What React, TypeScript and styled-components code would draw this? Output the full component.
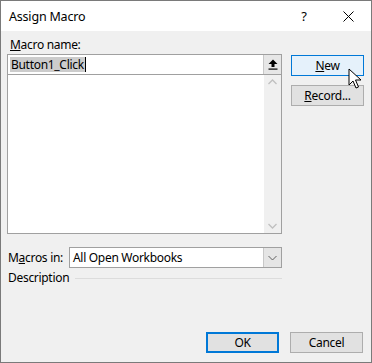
import React from "react";
import styled, { createGlobalStyle } from "styled-components";

const Global = createGlobalStyle`
  html, body { margin: 0; padding: 0; background: #ffffff; }
  * { box-sizing: border-box; }
`;

const Window = styled.div`
  position: relative;
  width: 372px;
  height: 363px;
  border: 1px solid #7a7a7a;
  background: #f0f0f0;
  display: flex;
  flex-direction: column;
  font-family: "Noto Sans", "Open Sans", sans-serif;
  font-size: 12px;
  letter-spacing: -0.3px;
  color: #000;
  overflow: hidden;
`;

const TitleBar = styled.div`
  height: 30px;
  background: #ffffff;
  display: flex;
  align-items: center;
  padding-left: 8px;
  flex-shrink: 0;
`;

const Title = styled.div`
  flex: 1;
  font-size: 12.5px;
  letter-spacing: -0.2px;
`;

const TitleButton = styled.div<{ $w: number }>`
  width: ${(p) => p.$w}px;
  height: 30px;
  display: flex;
  align-items: center;
  justify-content: center;
  font-size: 13px;
`;

const Body = styled.div`
  flex: 1;
  display: flex;
  flex-direction: column;
  padding: 7px 8px 9px 6px;
`;

const Top = styled.div`
  display: flex;
  gap: 9px;
`;

const LeftCol = styled.div`
  width: 275px;
  display: flex;
  flex-direction: column;
`;

const RightCol = styled.div`
  width: 73px;
  display: flex;
  flex-direction: column;
  gap: 9px;
  padding-top: 17px;
`;

const Label = styled.div<{ $indent?: number }>`
  height: 14px;
  line-height: 14px;
  white-space: nowrap;
  padding-left: ${(p) => p.$indent ?? 0}px;
`;

const U = styled.span`
  text-decoration: underline;
  text-underline-offset: 1px;
`;

const NameInput = styled.div`
  margin-top: 2px;
  height: 21px;
  border: 1px solid #a0a0a0;
  background: #fff;
  display: flex;
  align-items: center;
  padding-left: 2px;
`;

const InputText = styled.div`
  flex: 1;
  display: flex;
  align-items: center;
  height: 100%;
`;

const Selected = styled.span`
  background: #cccccc;
  line-height: 15px;
  padding: 0 1px;
`;

const Caret = styled.span`
  display: inline-block;
  width: 1px;
  height: 15px;
  background: #000;
`;

const UpButton = styled.div`
  width: 18px;
  height: 100%;
  background: #e6e6e6;
  border-left: 1px solid #c8c8c8;
  display: flex;
  align-items: center;
  justify-content: center;
`;

const ListBox = styled.div`
  height: 159px;
  border: 1px solid #a0a0a0;
  border-top: none;
  background: #fff;
  display: flex;
  justify-content: flex-end;
`;

const ScrollBar = styled.div`
  width: 17px;
  background: #f0f0f0;
  display: flex;
  flex-direction: column;
  justify-content: space-between;
  align-items: center;
  padding: 4px 0;
`;

const MacrosRow = styled.div`
  margin-top: 13px;
  display: flex;
  align-items: center;
`;

const MacrosLabel = styled(Label)`
  width: 62px;
`;

const Select = styled.div`
  width: 213px;
  height: 21px;
  border: 1px solid #a0a0a0;
  background: #fff;
  display: flex;
  align-items: center;
`;

const SelectText = styled.div`
  flex: 1;
  padding-left: 3px;
`;

const SelectArrow = styled.div`
  width: 18px;
  height: 100%;
  background: #e5e5e5;
  border-left: 1px solid #c8c8c8;
  display: flex;
  align-items: center;
  justify-content: center;
`;

const DescRow = styled.div`
  margin-top: 2px;
  display: flex;
  align-items: center;
  gap: 6px;
  height: 16px;
`;

const Rule = styled.div`
  flex: 1;
  height: 1px;
  background: #dcdcdc;
  margin-top: 1px;
`;

const Footer = styled.div`
  margin-top: auto;
  display: flex;
  justify-content: flex-end;
  gap: 11px;
`;

const Button = styled.div<{ $primary?: boolean; $hover?: boolean }>`
  width: 73px;
  height: 21px;
  display: flex;
  align-items: center;
  justify-content: center;
  background: ${(p) => (p.$hover ? "#e5f1fb" : "#e1e1e1")};
  border: ${(p) =>
    p.$primary ? "2px solid #0078d7" : p.$hover ? "1px solid #0078d7" : "1px solid #adadad"};
`;

const Cursor = styled.svg`
  position: absolute;
  left: 347px;
  top: 67px;
`;

export default function App() {
  return (
    <>
      <Global />
      <Window>
        <TitleBar>
          <Title>Assign Macro</Title>
          <TitleButton $w={44}>?</TitleButton>
          <TitleButton $w={45}>
            <svg width="11" height="11" viewBox="0 0 11 11">
              <path d="M0.5 0.5 L10.5 10.5 M10.5 0.5 L0.5 10.5" stroke="#000" strokeWidth="1" />
            </svg>
          </TitleButton>
        </TitleBar>
        <Body>
          <Top>
            <LeftCol>
              <Label $indent={3}>
                <U>M</U>acro name:
              </Label>
              <NameInput>
                <InputText>
                  <Selected>Button1_Click</Selected>
                  <Caret />
                </InputText>
                <UpButton>
                  <svg width="10" height="11" viewBox="0 0 10 11">
                    <path d="M5 0.5 L9.5 5 L6.5 5 L6.5 8 L3.5 8 L3.5 5 L0.5 5 Z" fill="#000" />
                    <rect x="0.5" y="9.5" width="9" height="1.2" fill="#000" />
                  </svg>
                </UpButton>
              </NameInput>
              <ListBox>
                <ScrollBar>
                  <svg width="9" height="6" viewBox="0 0 9 6">
                    <path d="M0.5 5 L4.5 1 L8.5 5" fill="none" stroke="#c0c0c0" strokeWidth="1.3" />
                  </svg>
                  <svg width="9" height="6" viewBox="0 0 9 6">
                    <path d="M0.5 1 L4.5 5 L8.5 1" fill="none" stroke="#c0c0c0" strokeWidth="1.3" />
                  </svg>
                </ScrollBar>
              </ListBox>
              <MacrosRow>
                <MacrosLabel $indent={1}>
                  M<U>a</U>cros in:
                </MacrosLabel>
                <Select>
                  <SelectText>All Open Workbooks</SelectText>
                  <SelectArrow>
                    <svg width="9" height="6" viewBox="0 0 9 6">
                      <path d="M0.5 1 L4.5 5 L8.5 1" fill="none" stroke="#606060" strokeWidth="1" />
                    </svg>
                  </SelectArrow>
                </Select>
              </MacrosRow>
              <DescRow>
                <Label $indent={1}>Description</Label>
                <Rule />
              </DescRow>
            </LeftCol>
            <RightCol>
              <Button $hover>
                <span>
                  <U>N</U>ew
                </span>
              </Button>
              <Button>
                <span>
                  <U>R</U>ecord...
                </span>
              </Button>
            </RightCol>
          </Top>
          <Footer>
            <Button $primary>OK</Button>
            <Button>Cancel</Button>
          </Footer>
        </Body>
        <Cursor width="14" height="23" viewBox="0 0 14 23">
          <path
            d="M1 1 L1 17 L5 13 L8 20 L10.5 19 L7.5 12 L13 12 Z"
            fill="#fff"
            stroke="#000"
            strokeWidth="1"
            strokeLinejoin="round"
          />
        </Cursor>
      </Window>
    </>
  );
}
